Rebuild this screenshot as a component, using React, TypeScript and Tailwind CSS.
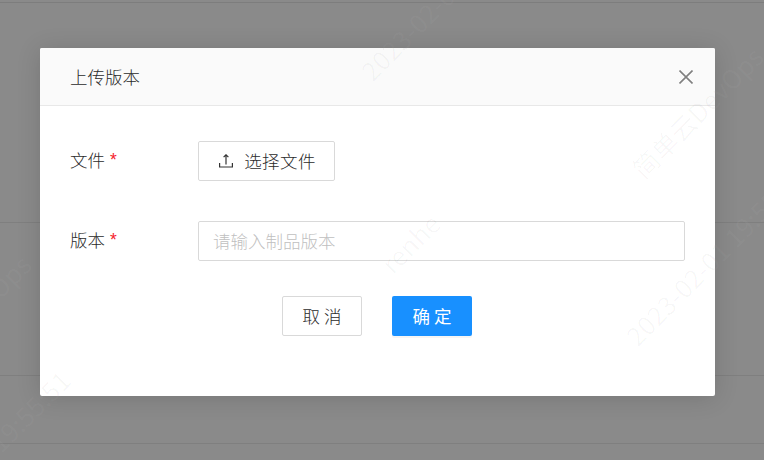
const font = { fontFamily: '"Noto Sans CJK SC", "Liberation Sans", sans-serif' };
const STAMP = "2023-02-01 19:55:51";
const BRAND = "简单云DevOps";

function Mark({ text, x, y, tone }: { text: string; x: number; y: number; tone: string }) {
  return (
    <span
      className={`absolute -translate-x-1/2 -translate-y-1/2 -rotate-45 whitespace-nowrap text-[26px] leading-none pointer-events-none ${tone}`}
      style={{ left: x, top: y }}
    >
      {text}
    </span>
  );
}

function Label({ text }: { text: string }) {
  return (
    <div className="flex w-[128px] shrink-0 pt-[6px] text-[17.5px] font-light leading-[26px] text-[#2b2b2b]">
      {text}
      <span className="ml-[5px] font-['Liberation_Sans'] font-normal text-[#f5222d]">*</span>
    </div>
  );
}

export default function App() {
  return (
    <div className="relative h-[460px] w-[764px] overflow-hidden bg-[#8a8a8a]" style={font}>
      <div className="flex h-full flex-col">
        <div className="h-[3px] shrink-0 border-b border-[#7d7d7d]" />
        <div className="h-[220px] shrink-0 border-b border-[#7f7f7f]" />
        <div className="h-[153px] shrink-0 border-b border-[#7f7f7f]" />
        <div className="h-[68px] shrink-0 border-b border-[#7f7f7f]" />
      </div>
      <Mark text={STAMP} x={450} y={-10} tone="text-white/[0.04]" />
      <Mark text={STAMP} x={-20} y={460} tone="text-white/[0.04]" />
      <Mark text={BRAND} x={-35} y={320} tone="text-white/[0.04]" />
      <Mark text={BRAND} x={697} y={112} tone="text-white/[0.04]" />
      <Mark text={STAMP} x={715} y={255} tone="text-white/[0.04]" />
      <Mark text="renhe" x={742} y={415} tone="text-white/[0.025]" />

      <div className="absolute inset-0 flex items-start pl-[40px] pt-[48px]">
        <div className="relative h-[348px] w-[675px] overflow-hidden rounded-[2px] bg-white shadow-[0_2px_24px_rgba(0,0,0,0.14)]">
          <div className="flex h-[58px] items-center justify-between border-b border-[#e8e8e8] bg-[#fafafa] pl-[30px] pr-[22px]">
            <span className="text-[17.5px] font-light leading-[26px] text-[#2b2b2b]">上传版本</span>
            <svg width="14" height="14" viewBox="0 0 14 14" fill="none" stroke="#808080" strokeWidth="1.6">
              <path d="M0.5 0.5 L13.5 13.5 M13.5 0.5 L0.5 13.5" />
            </svg>
          </div>
          <div className="px-[30px] pt-[35px]">
            <div className="flex h-[40px] items-start">
              <Label text="文件" />
              <button className="flex h-[40px] w-[137px] items-center justify-center gap-[11px] rounded-[2px] border border-[#d9d9d9] bg-white pl-[2px] text-[17.5px] font-light tracking-[0.4px] text-[#2b2b2b]">
                <svg width="14" height="14" viewBox="0 0 14 14" fill="none" stroke="#333" strokeWidth="1.2">
                  <path d="M7 0.8 V10.5 M4.6 3.2 L7 0.8 L9.4 3.2 M0.6 9 V13 H13.4 V9" />
                </svg>
                选择文件
              </button>
            </div>
            <div className="mt-[40px] flex h-[40px] items-start">
              <Label text="版本" />
              <div className="flex h-[40px] w-[487px] items-center rounded-[2px] border border-[#d9d9d9] bg-white px-[14px] text-[17.5px] font-light text-[#bfbfbf]">
                请输入制品版本
              </div>
            </div>
            <div className="mt-[35px] flex justify-center gap-[30px] pr-[1px]">
              <button className="flex h-[40px] w-[80px] items-center justify-center rounded-[2px] border border-[#d9d9d9] bg-white text-[17.5px] font-light tracking-[4px] text-[#2b2b2b]">
                <span className="mr-[-4px]">取消</span>
              </button>
              <button className="flex h-[40px] w-[80px] items-center justify-center rounded-[2px] bg-[#1890ff] text-[17.5px] tracking-[4px] text-white shadow-[0_2px_0_rgba(0,0,0,0.04)]">
                <span className="mr-[-4px]">确定</span>
              </button>
            </div>
          </div>
          <Mark text={STAMP} x={410} y={-58} tone="text-black/[0.03]" />
          <Mark text={BRAND} x={657} y={64} tone="text-black/[0.03]" />
          <Mark text="renhe" x={370} y={195} tone="text-black/[0.03]" />
          <Mark text={STAMP} x={675} y={207} tone="text-black/[0.03]" />
          <Mark text={STAMP} x={-60} y={412} tone="text-black/[0.03]" />
        </div>
      </div>
    </div>
  );
}
